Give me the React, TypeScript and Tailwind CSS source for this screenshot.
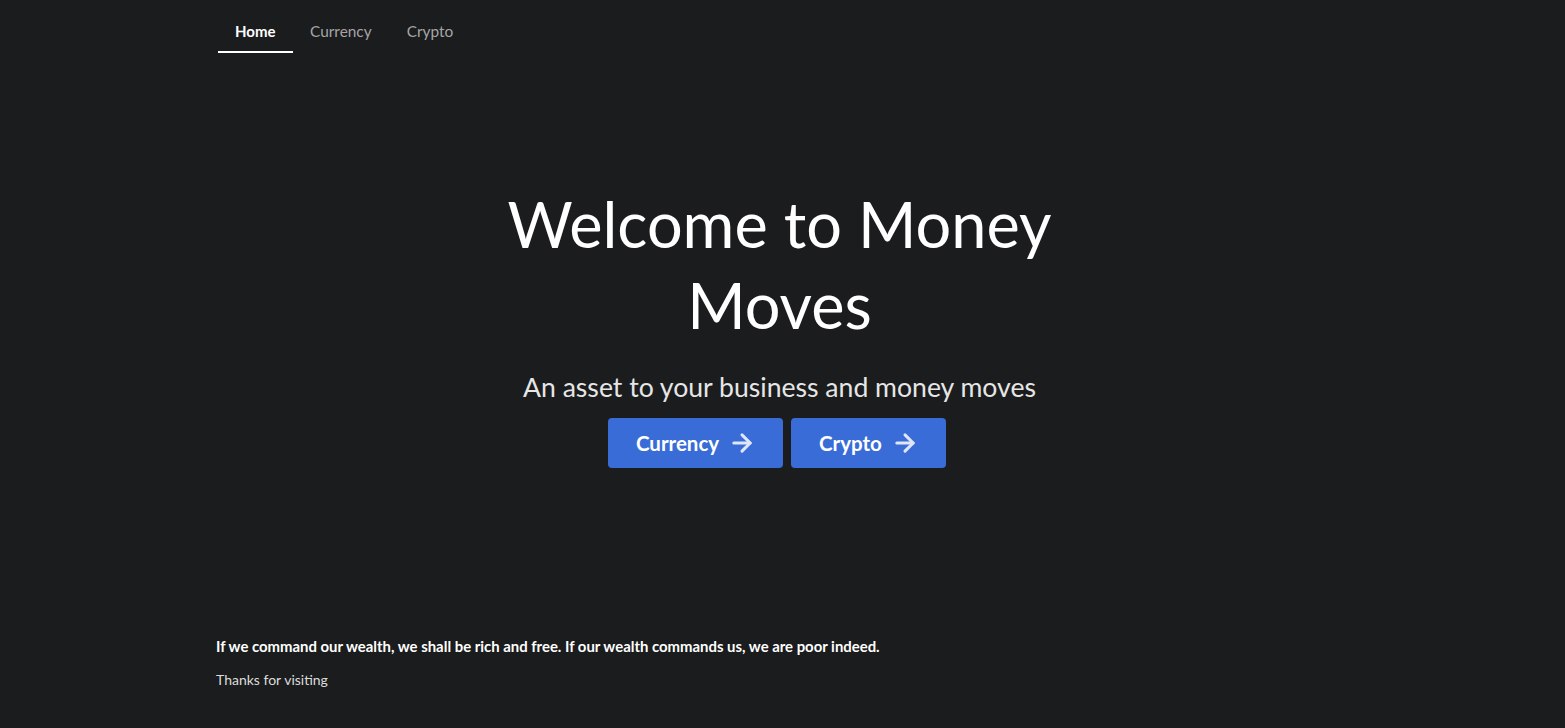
import { ArrowRight } from "lucide-react";

const tabs = ["Home", "Currency", "Crypto"];

const App = () => {
  return (
    <div className="min-h-[728px] bg-[#1b1c1d] font-['Lato','Liberation_Sans',sans-serif] text-white">
      {/* Top menu */}
      <nav className="mx-auto flex max-w-[1129px]">
        {tabs.map((tab, i) => (
          <a
            key={tab}
            href="#"
            className={
              i === 0
                ? "border-b-2 border-white px-[17px] pt-[22px] pb-[11px] text-[15px] leading-[18px] font-bold text-white"
                : "border-b-2 border-transparent px-[17.5px] pt-[22px] pb-[11px] text-[15.4px] leading-[18px] text-[#a5a5a6]"
            }
          >
            {tab}
          </a>
        ))}
      </nav>

      {/* Hero */}
      <section className="mx-auto flex max-w-[700px] -translate-x-[3px] flex-col items-center pt-[130px] text-center">
        <h1 className="text-[63px] leading-[81px] font-normal">Welcome to Money Moves</h1>
        <p className="mt-[26px] text-[26.6px] leading-[32px] text-[#e6e6e6]">
          An asset to your business and money moves
        </p>
        <div className="mt-[15px] -ml-[6px] flex gap-2">
          <button className="flex h-[50px] w-[175px] items-center justify-center gap-[9px] rounded bg-[#3a6cd7] pl-[2px] text-[20.5px] font-bold">
            Currency
            <ArrowRight size={28} className="text-[#dfe6f8]" strokeWidth={2.6} />
          </button>
          <button className="flex h-[50px] w-[155px] items-center justify-center gap-[9px] rounded bg-[#3a6cd7] pl-[2px] text-[20.5px] font-bold">
            Crypto
            <ArrowRight size={28} className="text-[#dfe6f8]" strokeWidth={2.6} />
          </button>
        </div>
      </section>

      {/* Footer */}
      <footer className="mx-auto mt-[168px] max-w-[1133px] pb-[38px]">
        <p className="text-[14.9px] leading-[20px] font-bold">
          If we command our wealth, we shall be rich and free. If our wealth commands us, we are poor indeed.
        </p>
        <p className="mt-[14px] text-[14px] leading-[20px] text-[#dcdcdc]">Thanks for visiting</p>
      </footer>
    </div>
  );
};

export default App;
